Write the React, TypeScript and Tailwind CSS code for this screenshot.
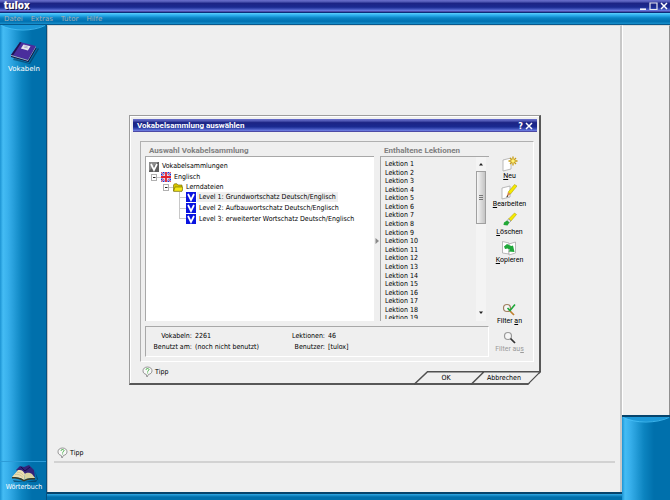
import React from "react";

const TREE = [
  "Level 1: Grundwortschatz Deutsch/Englisch",
  "Level 2: Aufbauwortschatz Deutsch/Englisch",
  "Level 3: erweiterter Wortschatz Deutsch/Englisch",
];
const LESSONS = Array.from({ length: 19 }, (_, i) => `Lektion ${i + 1}`);
const MENU = ["Datei", "Extras", "Tutor", "Hilfe"];
const TITLE_BAR =
  "bg-[linear-gradient(to_bottom,#6a70cc_0%,#5058b4_14%,#1c2484_28%,#1a2a90_60%,#3a4cb4_74%,#6c7ce0_90%,#3a2a80_100%)]";
const SIDE = "bg-[linear-gradient(to_right,#1c94d4_0px,#44bcf4_3px,#38b0ec_8px,#0c84c0_22px,#0070ac_32px,#0070ac_100%)]";

function TippIcon() {
  return (
    <svg viewBox="0 0 11 12" className="h-3 w-[11px]" fill="none">
      <path d="M5.5 1C2.8 1 1 2.6 1 4.8c0 2 1.3 3.2 3.200 3.600L5 11l1.500-2.600C8.600 8.100 10 6.800 10 4.800 10 2.600 8.200 1 5.500 1z" fill="#f8f8f8" stroke="#8a8a8a" strokeWidth="0.9" />
      <path d="M4 3.800c.1-.9.700-1.300 1.500-1.300s1.500.5 1.500 1.200c0 .9-1.400 1-1.400 2M5.600 6.500v.9" stroke="#3fae3f" strokeWidth="1" />
    </svg>
  );
}

function Tipp() {
  return (
    <button type="button" className="flex items-center gap-[2px] text-[7px] leading-3 text-black">
      <TippIcon />
      Tipp
    </button>
  );
}

function BookIcon() {
  return (
    <svg viewBox="0 0 30 24" className="h-6 w-[30px]">
      <path d="M5 18l15 5 9-15 1 1-9 15L4 20z" fill="#06304f" opacity=".55" />
      <path d="M2 15L11 2l16 4-8 14z" fill="#4a2d9c" />
      <path d="M2 15L11 2l1.500.4L4 15.500z" fill="#1d1450" />
      <path d="M2 15l17 5 8-14v1.200l-8 14L2 16z" fill="#a9a4b8" />
      <path d="M2 16l17 5 8-13.500.5.800L19.500 22 2 17z" fill="#16103c" />
      <path d="M14.500 4.600l7 1.700-2.600 4.200-7-1.900z" fill="#e6e6ee" />
      <path d="M14.800 7l4 1M15.500 5.800l3 .8" stroke="#8a86b0" strokeWidth=".6" />
    </svg>
  );
}

function DictionaryIcon() {
  return (
    <svg viewBox="0 0 30 18" className="h-[18px] w-[30px]">
      <path d="M4 16l12 2 12-2-2-9 3 8-2 3H5z" fill="#06304f" opacity=".6" />
      <path d="M7 6l4-4 4 1 5-2 5 5 1 7-12-3z" fill="#33237a" />
      <path d="M12 3l4 4 5-4" stroke="#15104a" fill="none" />
      <path d="M3 13L9 6c4-.5 5 .5 7 4l-1 6c-4-3-8-3-12-3z" fill="#e9dfb4" />
      <path d="M16 10c2-2 5-1 7 0l3 4c-4 0-7 0-11 2z" fill="#d9d3a0" />
      <path d="M3 13c4 0 8 0 12 3 4-2 7-2 11-2v1.500c-4 0-7 0-11 2-4-2.500-8-3-12-3z" fill="#3d3a20" />
      <path d="M6 10.500c3-.5 5 0 8 3M8 8.500c2-.5 4 0 6.500 3" stroke="#b3a878" strokeWidth=".5" fill="none" />
    </svg>
  );
}

function VIcon({ gray = false }: { gray?: boolean }) {
  return (
    <svg viewBox="0 0 10 10" className="h-[10px] w-[10px] shrink-0">
      <rect width="10" height="10" fill={gray ? "#5e5e5e" : "#0a14e0"} />
      {gray && <path d="M0 0h9L0 9z" fill="#8c8c8c" />}
      <path d="M2 2l3 6 3-6" stroke="#fff" strokeWidth="1.700" fill="none" />
    </svg>
  );
}

function Expander() {
  return (
    <svg viewBox="0 0 10 7" className="h-[7px] w-[10px] shrink-0">
      <rect x=".5" y=".5" width="5" height="6" fill="#fff" stroke="#b0b0b0" />
      <path d="M2 3.500h2.500" stroke="#222" />
      <path d="M6 3.500h4" stroke="#c8c8c8" />
    </svg>
  );
}

function FlagIcon() {
  return (
    <svg viewBox="0 0 10 10" className="h-[10px] w-[10px] shrink-0">
      <rect width="10" height="10" fill="#2030d0" />
      <path d="M0 0l10 10M10 0L0 10" stroke="#fff" strokeWidth="1.500" />
      <path d="M0 0l10 10M10 0L0 10" stroke="#e03040" strokeWidth=".8" />
      <path d="M5 0v10M0 5h10" stroke="#fff" strokeWidth="3" />
      <path d="M5 0v10M0 5h10" stroke="#e02030" strokeWidth="1.800" />
    </svg>
  );
}

function FolderIcon() {
  return (
    <svg viewBox="0 0 10 9" className="h-[9px] w-[10px] shrink-0">
      <path d="M.5 2l1-1.200h2.500l1 1.200h4v6H.5z" fill="#d8c400" stroke="#6c6400" strokeWidth=".6" />
      <path d="M2 4h8L9 8.300H.6z" fill="#f4e81a" stroke="#6c6400" strokeWidth=".6" />
    </svg>
  );
}

function Page() {
  return <path d="M1 4l8-2v11l-8 2z" fill="#fff" stroke="#a8a8a8" strokeWidth=".8" />;
}

function NewIcon() {
  return (
    <svg viewBox="0 0 16 16" className="h-4 w-4">
      <Page />
      <path d="M11 .5v9M6.500 5h9M8 2l6 6M14 2L8 8" stroke="#c89c10" strokeWidth="1.300" />
      <circle cx="11" cy="5" r="1.800" fill="#fff27a" />
    </svg>
  );
}

function EditIcon() {
  return (
    <svg viewBox="0 0 16 16" className="h-4 w-4">
      <Page />
      <path d="M13.500 .5L16 2 9.500 10l-2.500-1.800z" fill="#f5e800" stroke="#a49a00" strokeWidth=".5" />
      <path d="M7 8.200L9.500 10 5.500 13z" fill="#d88a50" />
      <path d="M6.400 11.300l-1.200 2.200 2.200-1.200" fill="#222" />
    </svg>
  );
}

function DeleteIcon() {
  return (
    <svg viewBox="0 0 16 16" className="h-4 w-4">
      <path d="M13.500 1l2 1.500L10 9 7.500 7z" fill="#f5ea00" stroke="#a49a00" strokeWidth=".5" />
      <path d="M7.500 7L10 9l-1.600 1.600L6 8.600z" fill="#e8e8e8" stroke="#777" strokeWidth=".5" />
      <path d="M6 8.600l2.400 2L6.500 13.500 2.500 13l.5-2.500z" fill="#22a838" />
    </svg>
  );
}

function CopyIcon() {
  return (
    <svg viewBox="0 0 16 16" className="h-4 w-4">
      <path d="M1.500 1.500L8 3v11l-6.500-1z" fill="#fff" stroke="#a8a8a8" strokeWidth=".8" />
      <path d="M8 4l6.500-2v11L8 15z" fill="#fff" stroke="#a8a8a8" strokeWidth=".8" />
      <path d="M3 6.500L6 4l3 1.500 1.500.500 1.500-.5 1.500 6.500-6-.5 1.500-1.800L6.500 8.500 4 9z" fill="#1fa83a" />
    </svg>
  );
}

function FilterIcon({ on = false }: { on?: boolean }) {
  return (
    <svg viewBox="0 0 16 16" className="h-4 w-4" fill="none">
      <circle cx="6" cy="7" r="3.500" fill="#f6f6f6" stroke={on ? "#a08060" : "#999"} strokeWidth="1.200" />
      <path d="M8.500 9.500l4.500 4.500" stroke={on ? "#c08030" : "#333"} strokeWidth="1.700" />
      {on && <path d="M6.500 7l2.500 2.500 5-6" stroke="#1fa83a" strokeWidth="1.600" />}
    </svg>
  );
}

type ToolProps = {
  icon: React.ReactNode;
  pre?: string;
  hot: string;
  post?: string;
  disabled?: boolean;
};

function Tool({ icon, pre = "", hot, post = "", disabled = false }: ToolProps) {
  return (
    <button
      type="button"
      disabled={disabled}
      className="flex flex-col items-center font-[Roboto,sans-serif] text-[7px] leading-[9px] whitespace-nowrap text-black disabled:text-[#9a9a9a]"
    >
      {icon}
      <span>
        {pre}
        <u>{hot}</u>
        {post}
      </span>
    </button>
  );
}

function CollectionTree() {
  return (
    <div className="flex-1 border-t border-l border-[#a8a8a8] bg-white pt-1">
      <div className="flex h-[11px] items-center gap-[3px] pl-[3px]">
        <VIcon gray />
        Vokabelsammlungen
      </div>
      <div className="flex h-[10px] items-center pl-[5px]">
        <Expander />
        <FlagIcon />
        <span className="pl-[3px]">Englisch</span>
      </div>
      <div className="flex h-[10px] items-center pl-[17px]">
        <Expander />
        <FolderIcon />
        <span className="pl-[3px]">Lerndateien</span>
      </div>
      <ul className="ml-[33px] grid h-8 grid-rows-3">
        {TREE.map((name, i) => (
          <li key={name} className="flex items-center">
            <span className="flex w-[7px] flex-col self-stretch">
              <span className="flex-1 border-b border-l border-[#c8c8c8]" />
              <span className={i < TREE.length - 1 ? "flex-1 border-l border-[#c8c8c8]" : "flex-1"} />
            </span>
            <VIcon />
            <span className={`ml-px px-[2px] leading-[10px] whitespace-nowrap ${i === 0 ? "bg-[#efefef]" : ""}`}>
              {name}
            </span>
          </li>
        ))}
      </ul>
    </div>
  );
}

function LessonList() {
  return (
    <div className="flex h-[165px] border-t border-l border-[#a8a8a8]">
      <div className="mb-[2px] flex-1 overflow-hidden pt-[3px] pl-1">
        <ol className="flex h-[163px] flex-col leading-[8px]">
          {LESSONS.map((l) => (
            <li key={l} className="flex-1">{l}</li>
          ))}
        </ol>
      </div>
      <div className="mr-[3px] flex w-[10px] flex-col bg-[#f4f4f4]">
        <button type="button" aria-label="Nach oben" className="flex h-[14px] items-center justify-center">
          <svg viewBox="0 0 6 4" className="h-1 w-[6px]"><path d="M1 3.500L3 1l2 2.500z" fill="#222" /></svg>
        </button>
        <div className="flex h-[53px] flex-col items-center justify-center gap-px border border-[#a0a0a0] bg-[linear-gradient(to_right,#f6f6f6,#dcdcdc,#c4c4c4)]">
          <span className="h-px w-1 bg-[#777]" />
          <span className="h-px w-1 bg-[#777]" />
          <span className="h-px w-1 bg-[#777]" />
        </div>
        <button type="button" aria-label="Nach unten" className="mt-auto flex h-[16px] items-center justify-center">
          <svg viewBox="0 0 6 4" className="h-1 w-[6px]"><path d="M1 .5L3 3l2-2.500z" fill="#222" /></svg>
        </button>
      </div>
    </div>
  );
}

function Heading({ children }: { children: string }) {
  return (
    <h2 className="pl-1 font-[Roboto,sans-serif] text-[8px] leading-[10px] font-bold whitespace-nowrap text-[#808080]">
      {children}
    </h2>
  );
}

function Dialog() {
  return (
    <section
      role="dialog"
      aria-label="Vokabelsammlung auswählen"
      className="flex w-[412px] flex-col border-t border-r-2 border-b-2 border-l border-t-[#9c9c9c] border-r-[#585858] border-b-[#585858] border-l-[#9c9c9c] bg-[#efefef] text-[7px] text-black shadow-[inset_1px_1px_0_#fff] [clip-path:polygon(0_0,100%_0,100%_calc(100%-13px),calc(100%-13px)_100%,0_100%)]"
    >
      <header className={`mt-[3px] mr-[2px] ml-[3px] flex h-[13px] items-center justify-between px-1 text-white ${TITLE_BAR}`}>
        <h1 className="font-[Roboto,sans-serif] text-[8px] leading-3 font-bold">Vokabelsammlung auswählen</h1>
        <div className="flex items-center gap-[2px]">
          <button type="button" aria-label="Hilfe" className="text-[9px] leading-3 font-bold">?</button>
          <button type="button" aria-label="Schließen">
            <svg viewBox="0 0 8 8" className="h-2 w-2"><path d="M1 1l6 6M7 1L1 7" stroke="#fff" strokeWidth="1.500" /></svg>
          </button>
        </div>
      </header>

      <div className="mt-[9px] mr-[5px] ml-[10px] flex border border-t-[#b0b0b0] border-r-white border-b-white border-l-[#b0b0b0] py-1 pr-[3px] pl-1">
        <div className="flex min-w-0 flex-1 flex-col gap-[5px]">
          <div className="flex h-[175px]">
            <div className="flex min-w-0 flex-1 flex-col">
              <Heading>Auswahl Vokabelsammlung</Heading>
              <CollectionTree />
            </div>
            <div className="flex w-[6px] items-center justify-center pt-[14px]">
              <svg viewBox="0 0 4 6" className="h-[6px] w-1"><path d="M.5 0L4 3 .5 6z" fill="#8a8a8a" /></svg>
            </div>
            <div className="flex w-[109px] flex-col">
              <Heading>Enthaltene Lektionen</Heading>
              <LessonList />
            </div>
          </div>
          <dl className="grid grid-cols-[46px_77px_50px_1fr] gap-x-[3px] border border-t-[#a8a8a8] border-r-white border-b-white border-l-[#a8a8a8] pt-1 pb-[3px] leading-[11px] whitespace-nowrap">
            <dt className="text-right">Vokabeln:</dt>
            <dd>2261</dd>
            <dt className="text-right">Lektionen:</dt>
            <dd>46</dd>
            <dt className="text-right">Benutzt am:</dt>
            <dd>(noch nicht benutzt)</dd>
            <dt className="text-right">Benutzer:</dt>
            <dd>[tulox]</dd>
          </dl>
        </div>
        <div className="flex w-[41px] flex-col items-center gap-[3px] pt-[10px] pb-[3px]">
          <Tool icon={<NewIcon />} hot="N" post="eu" />
          <Tool icon={<EditIcon />} hot="B" post="earbeiten" />
          <Tool icon={<DeleteIcon />} hot="L" post="öschen" />
          <Tool icon={<CopyIcon />} hot="K" post="opieren" />
          <div className="mt-auto flex flex-col items-center gap-[3px]">
            <Tool icon={<FilterIcon on />} pre="Filter " hot="a" post="n" />
            <Tool icon={<FilterIcon />} pre="Filter au" hot="s" disabled />
          </div>
        </div>
      </div>

      <footer className="flex h-[21px] items-start justify-between pt-1 pl-3">
        <Tipp />
        <div className="relative mt-[5px] -mr-[2px] flex h-[14px] w-[127px]">
          <svg viewBox="0 0 127 14" className="absolute inset-0 h-full w-full" fill="none" stroke="#505050" strokeWidth="1.500">
            <path d="M0 13.500L13.500 .8H127M57 13.500L70 .8M113.500 13.800L126.500 .8" />
          </svg>
          <button type="button" className="relative w-16 leading-[14px]">OK</button>
          <button type="button" className="relative w-[52px] leading-[14px]">Abbrechen</button>
        </div>
      </footer>
    </section>
  );
}

function CapHighlight() {
  return (
    <svg viewBox="0 0 46 6" preserveAspectRatio="none" className="h-[6px] w-full">
      <path d="M1 0h44c-6 3-14 4.500-22 4.500S7 3 1 0z" fill="#1c98d8" />
      <path d="M1 .5c6 3 14 4.500 22 4.500S39 3.500 45 .5" fill="none" stroke="#48c0f8" strokeWidth=".8" />
    </svg>
  );
}

export default function App() {
  return (
    <div className="relative flex h-screen flex-col bg-[#efefef] font-[DejaVu_Sans_Condensed,sans-serif]">
      <header className={`flex h-3 shrink-0 items-center justify-between pr-[2px] pl-1 text-white ${TITLE_BAR}`}>
        <span className="text-[10px] leading-3 font-bold [text-shadow:1px_1px_0_#101040,0_0_1px_#fff]">tulox</span>
        <div className="flex items-center gap-[2px]">
          <button type="button" aria-label="Minimieren">
            <svg viewBox="0 0 8 8" className="h-2 w-2"><path d="M1 7.200h6" stroke="#fff" strokeWidth="1.500" /></svg>
          </button>
          <button type="button" aria-label="Maximieren">
            <svg viewBox="0 0 9 8" className="h-2 w-[9px]"><path d="M1 1h7v6.500H1z" fill="none" stroke="#e8e8f0" strokeWidth="1.200" /></svg>
          </button>
          <button type="button" aria-label="Beenden">
            <svg viewBox="0 0 8 8" className="h-2 w-2"><path d="M1 1l6 6M7 1L1 7" stroke="#fff" strokeWidth="1.500" /></svg>
          </button>
        </div>
      </header>
      <nav className="flex h-[13px] shrink-0 items-center gap-2 border-t border-b border-t-[#0c2c78] border-b-[#06588c] bg-[linear-gradient(to_bottom,#5cd0fc,#2cacec_22%,#0a84c4_45%,#0070b0_75%,#1890cc)] pt-[2px] pl-1 text-[7px] text-[#a8acb0]">
        {MENU.map((m) => (
          <button key={m} type="button" className="font-[DejaVu_Sans,sans-serif] leading-[9px]">{m}</button>
        ))}
      </nav>

      <div className="flex min-h-0 flex-1">
        <aside className={`flex w-[47px] shrink-0 flex-col border-r border-[#065080] text-[7px] text-white ${SIDE}`}>
          <CapHighlight />
          <button type="button" className="flex flex-col items-center pt-[9px] pl-[2px] font-[DejaVu_Sans,sans-serif] leading-[11px]">
            <BookIcon />
            Vokabeln
          </button>
          <button type="button" className="mt-auto flex h-[39px] flex-col items-center border-t border-[#2c9cd8] pt-[2px] pl-[2px] leading-[11px]">
            <DictionaryIcon />
            Wörterbuch
          </button>
        </aside>

        <div className="flex min-w-0 flex-1 flex-col">
          <main className="flex flex-1 flex-col justify-end border-t border-r-2 border-l border-t-[#d8d8d8] border-r-[#c8c8c8] border-l-[#c0c0c0] pr-[5px] pb-[29px] pl-[6px]">
            <div className="pb-[2px] pl-[3px]"><Tipp /></div>
            <hr className="h-[2px] border-0 bg-[#d2d2d2]" />
          </main>
          <div className="h-2 border-t-2 border-[#06446c] bg-[linear-gradient(to_bottom,#30a8e4,#0070ac_50%)]" />
        </div>

        <aside className="flex w-12 shrink-0 flex-col">
          <div className="flex-1 border-t border-r border-l border-t-[#d8d8d8] border-r-[#909090] border-l-white" />
          <div className={`h-[85px] border-t-2 border-[#06446c] ${SIDE}`}>
            <CapHighlight />
          </div>
        </aside>
      </div>

      <div className="pointer-events-none absolute inset-0 flex items-center justify-center *:pointer-events-auto">
        <Dialog />
      </div>
    </div>
  );
}
